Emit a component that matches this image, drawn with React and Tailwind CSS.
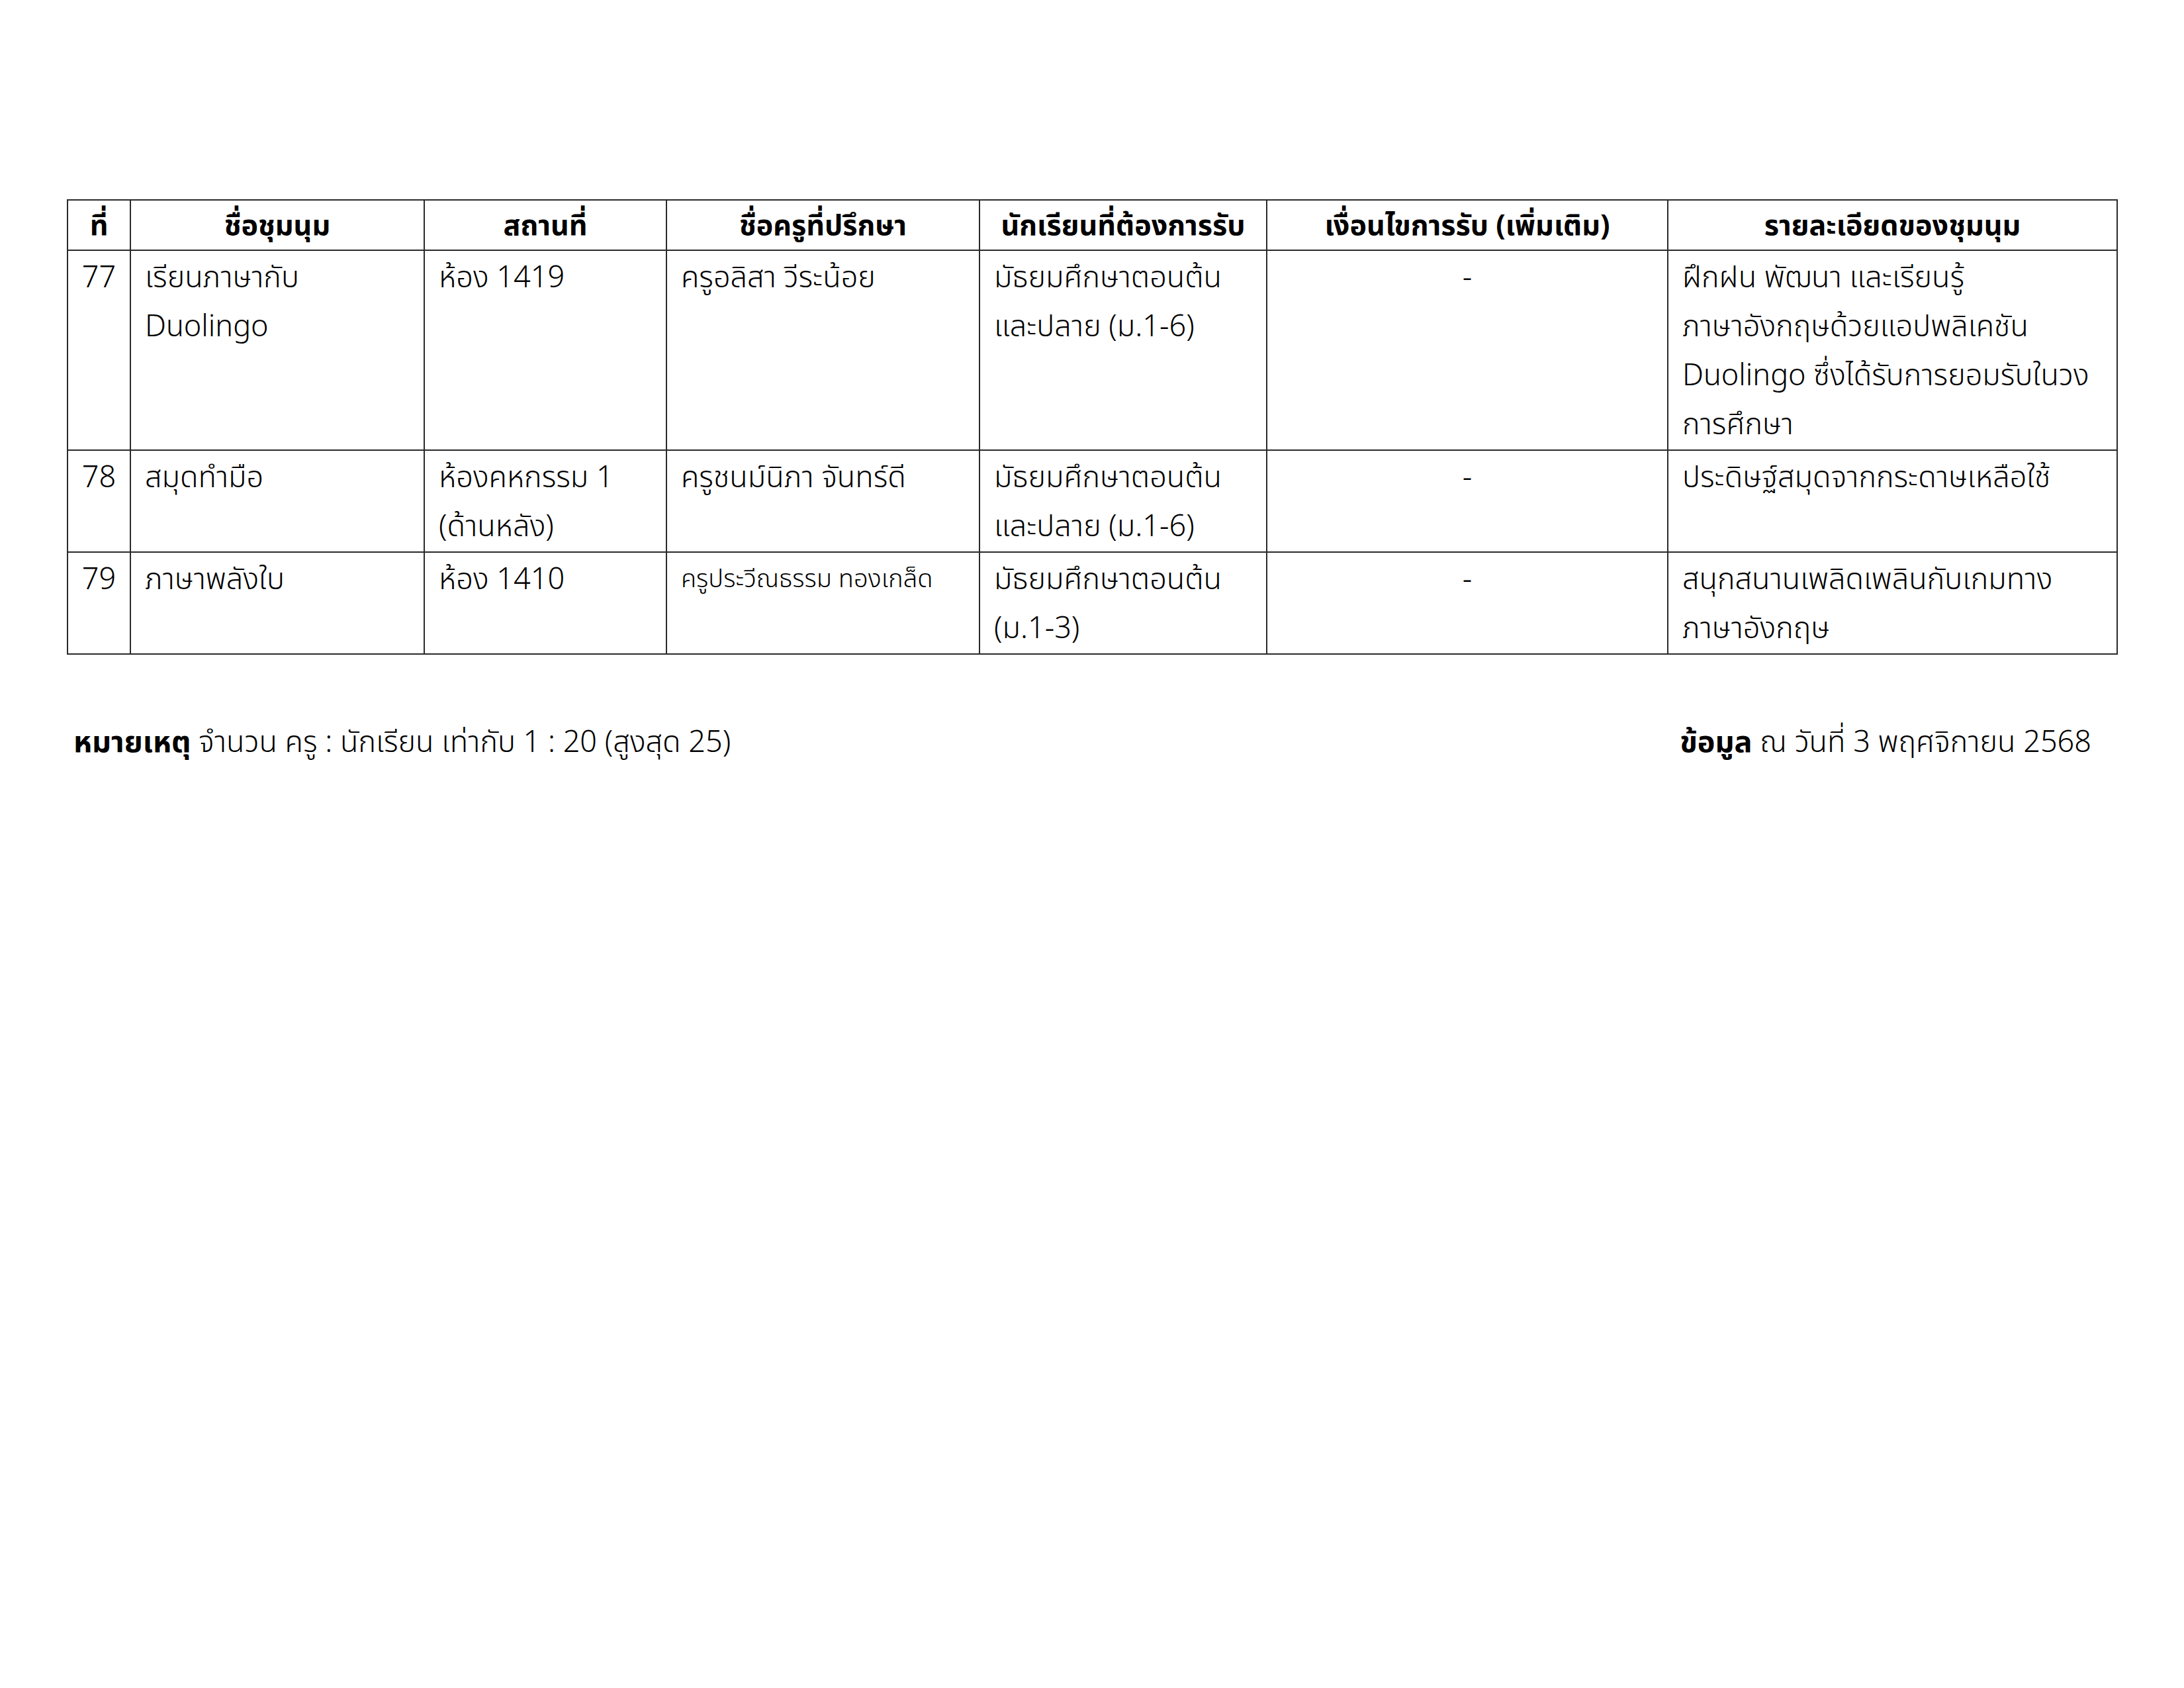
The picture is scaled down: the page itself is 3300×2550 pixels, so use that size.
import React from 'react';

const font = { fontFamily: '"Noto Sans Thai", "Noto Sans Thai Looped", "Noto Sans", "DejaVu Sans", sans-serif' };

const columns = [
  { title: 'ที่', width: 'w-[95px]' },
  { title: 'ชื่อชุมนุม', width: 'w-[444px]' },
  { title: 'สถานที่', width: 'w-[366px]' },
  { title: 'ชื่อครูที่ปรึกษา', width: 'w-[473px]' },
  { title: 'นักเรียนที่ต้องการรับ', width: 'w-[434px]' },
  { title: 'เงื่อนไขการรับ (เพิ่มเติม)', width: 'w-[606px]' },
  { title: 'รายละเอียดของชุมนุม', width: 'w-[679px]' },
];

// each cell is a list of lines, wrapped the way the sheet wraps them
const rows = [
  {
    no: '77',
    name: ['เรียนภาษากับ', 'Duolingo'],
    place: ['ห้อง 1419'],
    teacher: ['ครูอลิสา วีระน้อย'],
    students: ['มัธยมศึกษาตอนต้น', 'และปลาย (ม.1-6)'],
    detail: ['ฝึกฝน พัฒนา และเรียนรู้', 'ภาษาอังกฤษด้วยแอปพลิเคชัน', 'Duolingo ซึ่งได้รับการยอมรับในวง', 'การศึกษา'],
    height: 'h-[301px]',
  },
  {
    no: '78',
    name: ['สมุดทำมือ'],
    place: ['ห้องคหกรรม 1', '(ด้านหลัง)'],
    teacher: ['ครูชนม์นิภา จันทร์ดี'],
    students: ['มัธยมศึกษาตอนต้น', 'และปลาย (ม.1-6)'],
    detail: ['ประดิษฐ์สมุดจากกระดาษเหลือใช้'],
    height: 'h-[149px]',
  },
  {
    no: '79',
    name: ['ภาษาพลังใบ'],
    place: ['ห้อง 1410'],
    teacher: ['ครูประวีณธรรม ทองเกล็ด'],
    teacherSmall: true,
    students: ['มัธยมศึกษาตอนต้น', '(ม.1-3)'],
    detail: ['สนุกสนานเพลิดเพลินกับเกมทาง', 'ภาษาอังกฤษ'],
    height: 'h-[152px]',
  },
];

const Lines = ({ lines, className = '' }) => (
  <div className={className}>
    {lines.map((l, i) => (
      <div key={i} className="whitespace-nowrap">{l}</div>
    ))}
  </div>
);

const cell = 'border-2 border-[#2a2a2a] align-top p-0 pt-[4px]';

export default function App() {
  return (
    <div className="w-[3300px] min-h-[2550px] bg-white text-black" style={font}>
      <div className="pl-[101px] pt-[301px]">
        <table className="border-collapse table-fixed w-[3097px]">
          <colgroup>
            {columns.map((c) => (
              <col key={c.title} className={c.width} />
            ))}
          </colgroup>
          <thead>
            <tr className="h-[76px]">
              {columns.map((c) => (
                <th
                  key={c.title}
                  className="border-2 border-[#2a2a2a] text-center align-middle font-bold text-[43px] leading-[70px] pt-[4px] whitespace-nowrap"
                >
                  {c.title}
                </th>
              ))}
            </tr>
          </thead>
          <tbody className="text-[45px] leading-[74px] font-light">
            {rows.map((r) => (
              <tr key={r.no} className={r.height}>
                <td className={`${cell} text-center`}>{r.no}</td>
                <td className={`${cell} pl-[21px]`}>
                  <Lines lines={r.name} />
                </td>
                <td className={`${cell} pl-[21px]`}>
                  <Lines lines={r.place} />
                </td>
                <td className={`${cell} pl-[21px]`}>
                  <Lines lines={r.teacher} className={r.teacherSmall ? 'text-[38px]' : ''} />
                </td>
                <td className={`${cell} pl-[21px]`}>
                  <Lines lines={r.students} />
                </td>
                <td className={`${cell} text-center`}>-</td>
                <td className={`${cell} pl-[21px]`}>
                  <Lines lines={r.detail} />
                </td>
              </tr>
            ))}
          </tbody>
        </table>
      </div>

      <div className="flex justify-between pl-[111px] pr-[140px] mt-[96px] text-[45px] leading-[75px] font-light">
        <div className="whitespace-nowrap">
          <span className="font-bold">หมายเหตุ</span> จำนวน ครู : นักเรียน เท่ากับ 1 : 20 (สูงสุด 25)
        </div>
        <div className="whitespace-nowrap">
          <span className="font-bold">ข้อมูล</span> ณ วันที่ 3 พฤศจิกายน 2568
        </div>
      </div>
    </div>
  );
}
